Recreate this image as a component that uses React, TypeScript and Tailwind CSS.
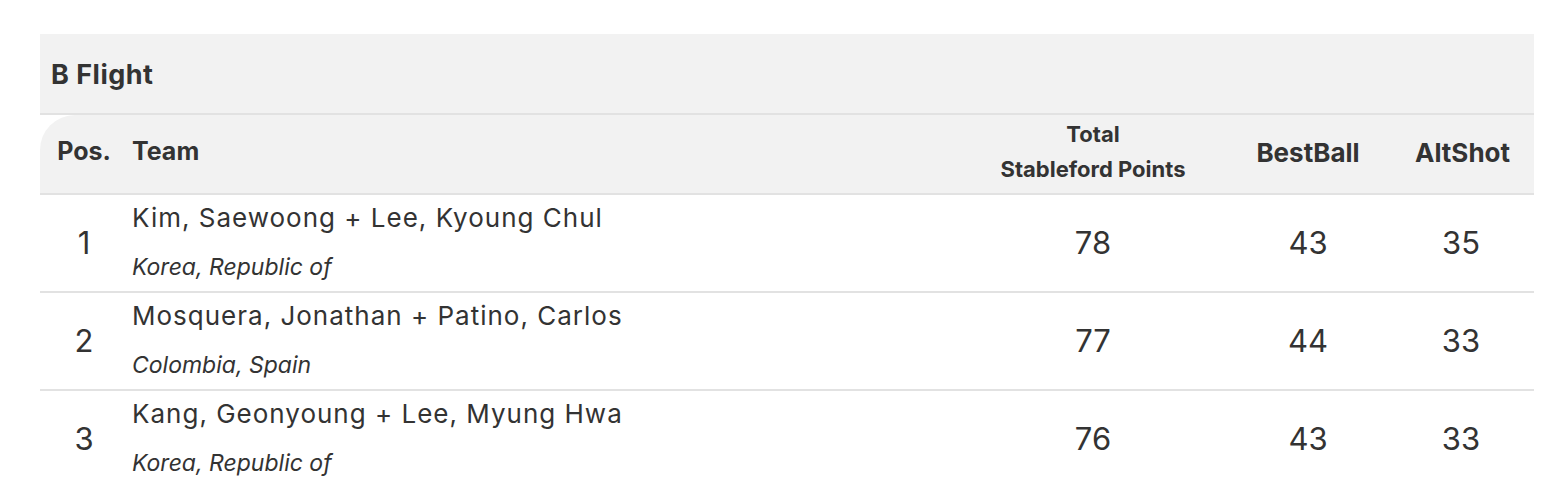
const rows = [
    { pos: 1, team: 'Kim, Saewoong + Lee, Kyoung Chul', country: 'Korea, Republic of', total: 78, best: 43, alt: 35 },
    { pos: 2, team: 'Mosquera, Jonathan + Patino, Carlos', country: 'Colombia, Spain', total: 77, best: 44, alt: 33 },
    { pos: 3, team: 'Kang, Geonyoung + Lee, Myung Hwa', country: 'Korea, Republic of', total: 76, best: 43, alt: 33 },
];

const cols = 'grid grid-cols-[88px_1fr_216px_214px_92px] pr-[27px]';

export default function App() {
    return (
        <div className="bg-white pt-[34px] pl-[40px] pr-[18px] font-['Inter',sans-serif] text-[#333]">
            <div className="flex h-[79px] items-center bg-[#f2f2f2] px-[11px] pt-[3px] text-[27px] font-bold tracking-[0.5px]">
                B Flight
            </div>
            <div className="h-[2px] bg-[#e2e2e2]" />
            <div className={`${cols} h-[78px] items-center rounded-tl-[35px] bg-[#f2f2f2] pb-[4px] text-[25px] font-bold`}>
                <div className="text-center">Pos.</div>
                <div className="pl-[4px]">Team</div>
                <div className="text-center text-[22px] leading-[35px] whitespace-nowrap">
                    Total
                    <br />
                    Stableford Points
                </div>
                <div className="text-center text-[26px] whitespace-nowrap">BestBall</div>
                <div className="text-center text-[26px] whitespace-nowrap">AltShot</div>
            </div>
            {rows.map((row) => (
                <div key={row.pos}>
                    <div className="h-[2px] bg-[#e2e2e2]" />
                    <div className={`${cols} h-[96px] items-center text-[31px]`}>
                        <div className="text-center">{row.pos}</div>
                        <div className="flex flex-col pb-[5px] pl-[4px]">
                            <span className="text-[26px] leading-[30px] tracking-[1px] whitespace-nowrap">{row.team}</span>
                            <span className="mt-[22px] text-[23px] italic leading-[24px]">{row.country}</span>
                        </div>
                        <div className="text-center">{row.total}</div>
                        <div className="text-center">{row.best}</div>
                        <div className="text-center">{row.alt}</div>
                    </div>
                </div>
            ))}
        </div>
    );
}
